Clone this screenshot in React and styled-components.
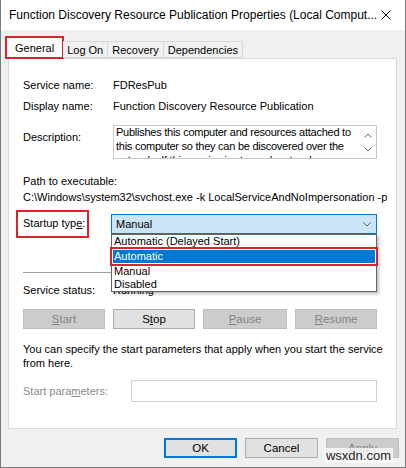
import React from 'react'
import styled, { createGlobalStyle } from 'styled-components'

const GlobalStyle = createGlobalStyle`
  html, body {
    margin: 0;
    padding: 0;
    background: #ffffff;
  }
  body {
    font-family: "Liberation Sans", Arial, sans-serif;
    font-size: 11px;
    color: #000;
  }
`

const Window = styled.div`
  width: 406px;
  height: 468px;
  box-sizing: border-box;
  border: 1px solid #7a7a7a;
  border-top: none;
  background: #f0f0f0;
  display: flex;
  flex-direction: column;
  position: relative;
  overflow: hidden;
`

const TitleBar = styled.div`
  height: 30px;
  background: #fff;
  display: flex;
  align-items: center;
  justify-content: space-between;
  padding: 0 8px 0 8px;
  flex-shrink: 0;
`

const Title = styled.span`
  font-size: 12px;
  white-space: nowrap;
`

const Close = styled.svg`
  width: 10px;
  height: 10px;
  margin-right: 6px;
`

const Tabs = styled.div`
  display: flex;
  align-items: flex-end;
  padding: 7px 0 0 5px;
  height: 21px;
  position: relative;
  z-index: 1;
`

const Tab = styled.div`
  height: ${(p) => (p.$active ? '21px' : '17px')};
  box-sizing: border-box;
  padding: 0 ${(p) => (p.$active ? '8px' : '4px')};
  display: flex;
  align-items: center;
  background: ${(p) => (p.$active ? '#fff' : '#f0f0f0')};
  border: 1px solid #d9d9d9;
  border-bottom: ${(p) => (p.$active ? 'none' : '1px solid #d9d9d9')};
  border-left: ${(p) => (p.$first ? '1px solid #d9d9d9' : 'none')};
  outline: ${(p) => (p.$active ? '2px solid #d9232e' : 'none')};
  outline-offset: -1px;
  white-space: nowrap;
`

const Panel = styled.div`
  margin: 0 8px 0 7px;
  height: 371px;
  box-sizing: border-box;
  background: #fff;
  border: 1px solid #d9d9d9;
  padding: 19px 19px 0 14px;
  display: flex;
  flex-direction: column;
  position: relative;
`

const Row = styled.div`
  display: flex;
  align-items: ${(p) => (p.$top ? 'flex-start' : 'center')};
  margin-top: ${(p) => p.$mt || 0}px;
  line-height: 15px;
`

const Label = styled.div`
  width: ${(p) => p.$w || 90}px;
  flex-shrink: 0;
  color: ${(p) => (p.$muted ? '#8a8a8a' : '#000')};
  padding-top: ${(p) => p.$pt || 0}px;
  white-space: nowrap;
`

const Value = styled.div`
  white-space: nowrap;
`

const Key = styled.span`
  text-decoration: underline;
`

const Description = styled.div`
  width: 266px;
  height: 34px;
  box-sizing: border-box;
  border: 1px solid #c8c8c8;
  display: flex;
  overflow: hidden;
`

const DescText = styled.div`
  flex: 1;
  padding: 0 2px;
  line-height: 14px;
  margin-top: -1px;
  letter-spacing: -0.25px;
  white-space: nowrap;
  overflow: hidden;
`

const Scroll = styled.div`
  width: 17px;
  flex-shrink: 0;
  display: flex;
  flex-direction: column;
  align-items: center;
  justify-content: space-between;
  padding: 7px 0 6px;
`

const Line = styled.div`
  line-height: 16px;
  margin-top: ${(p) => p.$mt || 0}px;
  white-space: nowrap;
`

const RedBox = styled.div`
  outline: 2px solid #d9232e;
  margin-left: -5px;
  padding: 4px 0 5px 5px;
  width: 71px;
  margin-right: 24px;
  box-sizing: border-box;
  white-space: nowrap;
`

const ComboWrap = styled.div`
  position: relative;
`

const Combo = styled.div`
  width: 266px;
  height: 20px;
  box-sizing: border-box;
  background: #cce4f7;
  border: 1px solid #0078d7;
  display: flex;
  align-items: center;
  justify-content: space-between;
  padding: 0 5px 0 4px;
`

const List = styled.div`
  position: absolute;
  top: 20px;
  left: 0;
  width: 266px;
  box-sizing: border-box;
  background: #fff;
  border: 1px solid #646464;
  box-shadow: 2px 2px 3px rgba(0, 0, 0, 0.25);
  z-index: 3;
  padding: 0 1px;
`

const Item = styled.div`
  height: 13px;
  line-height: 13px;
  padding-left: 1px;
  color: ${(p) => (p.$selected ? '#fff' : '#000')};
  background: ${(p) => (p.$selected ? '#0078d7' : 'transparent')};
  outline: ${(p) => (p.$selected ? '2px solid #d9232e' : 'none')};
  outline-offset: 1px;
  margin: ${(p) => (p.$selected ? '2px 0 2px' : '0')};
`

const Separator = styled.div`
  height: 1px;
  background: #a0a0a0;
  margin-top: 36px;
`

const Buttons = styled.div`
  display: flex;
  gap: 8px;
  margin-top: 11px;
`

const Button = styled.div`
  width: ${(p) => p.$w || 82}px;
  height: 20px;
  box-sizing: border-box;
  display: flex;
  align-items: center;
  justify-content: center;
  font-size: 11.5px;
  background: ${(p) => (p.$disabled ? '#cccccc' : '#e1e1e1')};
  border: ${(p) =>
    p.$default ? '2px solid #0078d7' : p.$disabled ? '1px solid #bfbfbf' : '1px solid #adadad'};
  color: ${(p) => (p.$disabled ? '#838383' : '#000')};
`

const Para = styled.div`
  margin-top: 13px;
  line-height: 14px;
  white-space: nowrap;
`

const Input = styled.div`
  width: 248px;
  height: 22px;
  box-sizing: border-box;
  border: 1px solid #d0d0d0;
  background: #fff;
`

const Footer = styled.div`
  display: flex;
  justify-content: flex-end;
  gap: 8px;
  padding: 9px 6px 0 0;
`

const Watermark = styled.div`
  position: absolute;
  right: 12px;
  bottom: 4px;
  font-size: 13px;
  color: #222;
  background: rgba(255, 255, 255, 0.75);
  padding: 0 2px;
  z-index: 5;
`

const Chevron = ({ up }) => (
  <svg width="8" height="5" viewBox="0 0 8 5">
    <path d={up ? 'M0.5 4.5 L4 1 L7.5 4.5' : 'M0.5 0.5 L4 4 L7.5 0.5'} fill="none" stroke="#606060" strokeWidth="1" />
  </svg>
)

export default function App() {
  return (
    <>
      <GlobalStyle />
      <Window>
        <TitleBar>
          <Title>Function Discovery Resource Publication Properties (Local Comput...</Title>
          <Close viewBox="0 0 10 10">
            <path d="M0.5 0.5 L9.5 9.5 M9.5 0.5 L0.5 9.5" stroke="#000" strokeWidth="1" />
          </Close>
        </TitleBar>
        <Tabs>
          <Tab $active $first>General</Tab>
          <Tab>Log On</Tab>
          <Tab>Recovery</Tab>
          <Tab>Dependencies</Tab>
        </Tabs>
        <Panel>
          <Row>
            <Label>Service name:</Label>
            <Value>FDResPub</Value>
          </Row>
          <Row $mt={6}>
            <Label>Display name:</Label>
            <Value>Function Discovery Resource Publication</Value>
          </Row>
          <Row $mt={11} $top>
            <Label $pt={5}>Description:</Label>
            <Description>
              <DescText>
                Publishes this computer and resources attached to
                <br />
                this computer so they can be discovered over the
                <br />
                network.&nbsp; If this service is stopped, network
              </DescText>
              <Scroll>
                <Chevron up />
                <Chevron />
              </Scroll>
            </Description>
          </Row>
          <Line $mt={14}>Path to executable:</Line>
          <Line>C:\Windows\system32\svchost.exe -k LocalServiceAndNoImpersonation -p</Line>
          <Row $mt={7}>
            <RedBox>
              Startup typ<Key>e</Key>:
            </RedBox>
            <ComboWrap>
              <Combo>
                <span>Manual</span>
                <Chevron />
              </Combo>
              <List>
                <Item>Automatic (Delayed Start)</Item>
                <Item $selected>Automatic</Item>
                <Item>Manual</Item>
                <Item>Disabled</Item>
              </List>
            </ComboWrap>
          </Row>
          <Separator />
          <Row $mt={10}>
            <Label>Service status:</Label>
            <Value>Running</Value>
          </Row>
          <Buttons>
            <Button $disabled>
              <Key>S</Key>tart
            </Button>
            <Button>
              S<Key>t</Key>op
            </Button>
            <Button $disabled $w={84}>
              <Key>P</Key>ause
            </Button>
            <Button $disabled>
              <Key>R</Key>esume
            </Button>
          </Buttons>
          <Para>
            You can specify the start parameters that apply when you start the service
            <br />
            from here.
          </Para>
          <Row $mt={10}>
            <Label $muted $w={108}>
              Start para<Key>m</Key>eters:
            </Label>
            <Input />
          </Row>
        </Panel>
        <Footer>
          <Button $default $w={73}>OK</Button>
          <Button $w={73}>Cancel</Button>
          <Button $disabled $w={73}>Apply</Button>
        </Footer>
        <Watermark>wsxdn.com</Watermark>
      </Window>
    </>
  )
}
